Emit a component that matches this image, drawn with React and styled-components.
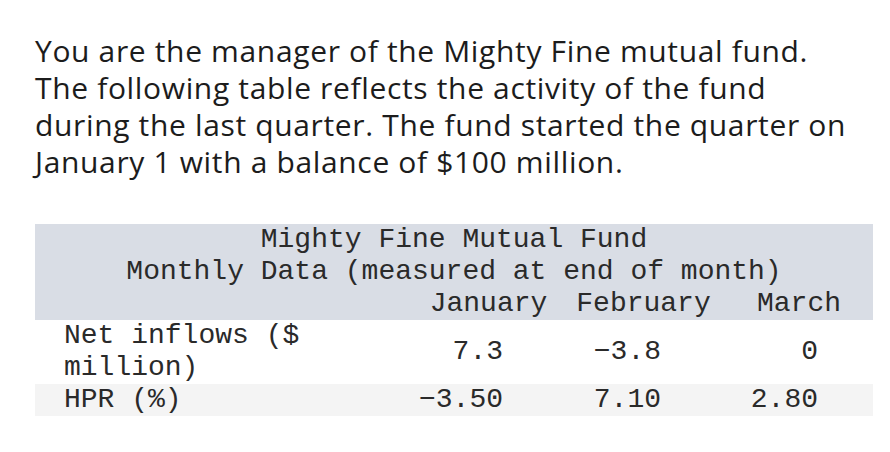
import styled, { createGlobalStyle } from 'styled-components'

const GlobalStyle = createGlobalStyle`
  html, body {
    margin: 0;
    padding: 0;
    background: #ffffff;
  }
`

const Page = styled.div`
  width: 890px;
  height: 452px;
  box-sizing: border-box;
  padding: 32px 0 0 35px;
  background: #ffffff;
`

const Intro = styled.p`
  margin: 0;
  width: 850px;
  font-family: 'Open Sans', 'Liberation Sans', sans-serif;
  font-size: 30px;
  letter-spacing: 0.65px;
  line-height: 37px;
  color: #1c1c1c;
`

const Table = styled.div`
  margin-top: 44px;
  width: 838px;
  display: grid;
  grid-template-columns: 380px 147px 163px 148px;
  font-family: 'Liberation Mono', 'Courier New', monospace;
  font-size: 28px;
  line-height: 32px;
  color: #2a2a2a;
`

const TitleCell = styled.div`
  grid-column: 1 / -1;
  background: #d9dde5;
  text-align: center;
  white-space: pre;
`

const HeadCell = styled.div`
  background: #d9dde5;
  text-align: center;
  white-space: pre;
`

const Row = styled.div`
  display: contents;
`

const LabelCell = styled.div`
  background: ${(p) => (p.$shade ? '#f4f4f4' : '#ffffff')};
  padding-left: 29px;
  padding-right: 100px;
`

const ValueCell = styled.div`
  background: ${(p) => (p.$shade ? '#f4f4f4' : '#ffffff')};
  display: flex;
  align-items: center;
  justify-content: flex-end;
  padding-right: ${(p) => p.$pad}px;
`

const months = [
  { name: 'January', pad: 59 },
  { name: 'February', pad: 64 },
  { name: 'March', pad: 55 },
]

const rows = [
  { label: 'Net inflows ($ million)', values: ['7.3', '−3.8', '0'] },
  { label: 'HPR (%)', values: ['−3.50', '7.10', '2.80'], shade: true },
]

export default function App() {
  return (
    <Page>
      <GlobalStyle />
      <Intro>
        You are the manager of the Mighty Fine mutual fund.
        <br />
        The following table reflects the activity of the fund
        <br />
        during the last quarter. The fund started the quarter on
        <br />
        January 1 with a balance of $100 million.
      </Intro>
      <Table>
        <TitleCell>Mighty Fine Mutual Fund</TitleCell>
        <TitleCell>Monthly Data (measured at end of month)</TitleCell>
        <HeadCell />
        {months.map((m) => (
          <HeadCell key={m.name}>{m.name}</HeadCell>
        ))}
        {rows.map((r) => (
          <Row key={r.label}>
            <LabelCell $shade={r.shade}>{r.label}</LabelCell>
            {r.values.map((v, i) => (
              <ValueCell key={i} $shade={r.shade} $pad={months[i].pad}>
                {v}
              </ValueCell>
            ))}
          </Row>
        ))}
      </Table>
    </Page>
  )
}
